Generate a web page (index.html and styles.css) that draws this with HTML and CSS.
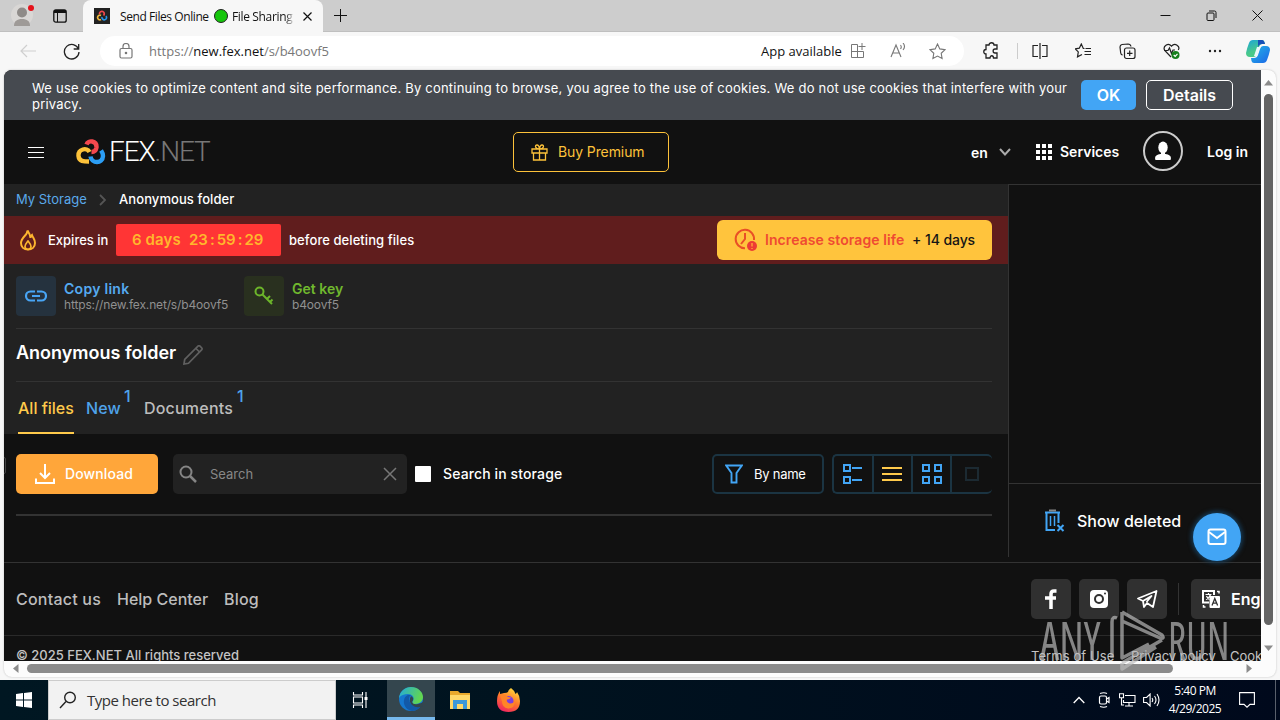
FILE: index.html
```html
<!DOCTYPE html>
<html lang="en">
<head>
<meta charset="utf-8">
<title>Send Files Online</title>
<link rel="stylesheet" href="styles.css">
</head>
<body>
<div class="desktop">
  <div class="titlebar">
    <svg class="profile" width="24" height="28" viewBox="0 0 24 28"><circle cx="11" cy="15" r="11" fill="#d9d7d5"/><circle cx="11" cy="12.500" r="5" fill="#8f8b88"/><path d="M3 26c0-5 3-7 8-7s8 2 8 7z" fill="#9e9a97"/><circle cx="20" cy="8" r="3" fill="#e5121b"/></svg>
    <svg class="workspace" width="14" height="14" viewBox="0 0 14 14" fill="none" stroke="#111"><rect x=".8" y=".8" width="12.400" height="12.400" rx="2" stroke-width="1.300"/><path d="M1 2.500h12" stroke-width="3"/><path d="M4.500 3v10"/></svg>
    <div class="tab">
      <svg class="favicon" width="16" height="16" viewBox="0 0 16 16"><rect width="16" height="16" fill="#222"/><g fill="none" stroke-width="1.700"><path d="M5.500 6a2.400 2.400 0 1 1 4 1.500" stroke="#f0484c"/><path d="M7 7.500a2.300 2.300 0 1 0 0 4" stroke="#efb63b"/><path d="M8 9a2.300 2.300 0 1 0 4-1" stroke="#2695e8"/></g></svg>
      <span class="tab-a">Send Files Online</span><i class="dot"></i><span class="tab-b">File Sharing</span>
      <svg class="tab-x" width="9" height="9" viewBox="0 0 9 9"><path d="M.5.5l8 8m0-8l-8 8" stroke="#111" stroke-width="1.200"/></svg>
    </div>
    <svg class="plus" width="14" height="14" viewBox="0 0 14 14"><path d="M6.500 0v13M0 6.500h13" stroke="#111"/></svg>
    <div class="wincontrols">
      <svg width="11" height="11" viewBox="0 0 11 11"><path d="M.5 5.500h10" stroke="#111"/></svg>
      <svg width="11" height="11" viewBox="0 0 11 11" fill="none" stroke="#111"><rect x="1" y="3" width="7" height="7.500" rx="1"/><path d="M3 1h5.500q1.500 0 1.500 1.500V8"/></svg>
      <svg width="11" height="11" viewBox="0 0 11 11"><path d="M.5.5l10 10m0-10l-10 10" stroke="#111"/></svg>
    </div>
  </div>
  <div class="navbar">
    <svg class="back" width="16" height="14" viewBox="0 0 16 14" fill="none" stroke="#cfcfcf" stroke-width="1.200"><path d="M7 1L1 7l6 6M1 7h15"/></svg>
    <svg class="reload" width="17" height="17" viewBox="0 0 17 17" fill="none" stroke="#222" stroke-width="1.300"><path d="M15.500 6A7.300 7.300 0 1 0 16 9M15.700 1v5h-5"/></svg>
    <div class="address">
      <svg class="lock" width="14" height="16" viewBox="0 0 14 16" fill="none" stroke="#777" stroke-width="1.200"><rect x="1" y="5.500" width="12" height="9.500" rx="1.500"/><path d="M4 5V3.500a3 3 0 0 1 6 0V5"/><circle cx="7" cy="10" r=".7" fill="#777"/></svg>
      <span class="url">https://<b>new.fex.net</b>/s/b4oovf5</span>
      <span class="app">App available</span>
      <svg class="i-app" width="16" height="16" viewBox="0 0 16 16" fill="none" stroke="#777"><path d="M7.500 1.500h-6v13h12V8.500h-12M7.500 1.500v13M12 0v7M8.500 3.500h7"/></svg>
      <svg class="i-read" width="17" height="16" viewBox="0 0 17 16" fill="none" stroke="#777" stroke-width="1.100"><path d="M1 14L6 2l5 12M3 10h6M10.500 2q1.500 2 0 4M13 0q3 3.500 0 7"/></svg>
      <svg class="i-star" width="17" height="17" viewBox="0 0 17 17" fill="none" stroke="#777" stroke-width="1.100"><path d="M8.500 1l2.300 4.900 5.200.7-3.800 3.700.9 5.300-4.600-2.500-4.600 2.500.9-5.300L1 6.600l5.200-.7z"/></svg>
    </div>
    <div class="tools">
      <svg width="17" height="18" viewBox="0 0 17 18" fill="none" stroke="#222" stroke-width="1.300"><path d="M3 3h3c0-3 5-3 5 0h3v4h-2c-2.500 0-2.500 4 0 4h2v5h-3.500c0-3-3.500-3-3.500 0H3v-4c-3 0-3-4.500 0-4.500z"/></svg>
      <i class="vsep"></i>
      <svg width="16" height="16" viewBox="0 0 16 16" fill="none" stroke="#222" stroke-width="1.200"><path d="M6 2.500H1v11h5M10 2.500h5v11h-5M8 0v16"/></svg>
      <svg width="17" height="16" viewBox="0 0 17 16" fill="none" stroke="#222" stroke-width="1.200"><path d="M9.500 5.500H8.300L6.300 1 4.300 5.200l-4 .7 3 3-.8 5L7 11.500M10.500 5.500H16M9.500 8.500H16M9.500 11.500H16"/></svg>
      <svg width="17" height="17" viewBox="0 0 17 17" fill="none" stroke="#222" stroke-width="1.200"><path d="M12 3.500Q11.500 1 9 1L3 1.500Q1 2 1 4l.7 6q.3 2 2 2"/><rect x="5.500" y="5" width="10.500" height="10.500" rx="2"/><path d="M10.700 7.500v5.500M8 10.300h5.500"/></svg>
      <svg width="18" height="17" viewBox="0 0 18 17" fill="none" stroke="#222" stroke-width="1.200"><path d="M8 14L1.700 7.300C-.5 3.500 5-1 8.500 3.200 12-1 17.500 3.500 15.300 7M1 7.500h4L6.500 5l2 5.500L10 7h2"/><circle cx="12.500" cy="12" r="4" fill="#16801c" stroke="none"/><path d="M10.700 12l1.500 1.300 2.300-2.500" stroke="#fff"/></svg>
      <svg width="14" height="4" viewBox="0 0 14 4" fill="#222"><circle cx="2" cy="2" r="1.200"/><circle cx="7" cy="2" r="1.200"/><circle cx="12" cy="2" r="1.200"/></svg>
      <svg class="copilot" width="24" height="23" viewBox="0 0 24 23"><defs><linearGradient id="cp" x2=".5" y2="1"><stop stop-color="#1aa4db"/><stop offset=".7" stop-color="#48c98a"/></linearGradient><linearGradient id="cq" y2="1"><stop stop-color="#22b7e5"/><stop offset="1" stop-color="#1c66e8"/></linearGradient></defs><path d="M7 0h9q2 0 2.500 2L19 4h-3q-2 0-3 3l-2 7q-1 3-4 3H4q-4 0-4-4Q1 8 3 3 4 0 7 0z" fill="url(#cp)"/><path d="M17 6h3q4 0 4 4-1 5-3 10-1 3-4 3H8q-2 0-2.500-2L5 18h3q3 0 4-3l2-6q1-3 3-3z" fill="url(#cq)"/><path d="M12 0h4q2 0 3 4h-3q-3 0-4 3z" fill="#174fb8"/><path d="M11 7h3l-3 9H8z" fill="#e9f8fb"/></svg>
    </div>
  </div>
  <div class="frame">
    <div class="page">
      <div class="cookie">
        <p class="cookie-text">We use cookies to optimize content and site performance. By continuing to browse, you agree to the use of cookies. We do not use cookies that interfere with your<br><span>privacy.</span></p>
        <div class="btn-ok">OK</div><div class="btn-details">Details</div>
      </div>
      <div class="header">
        <svg class="burger" width="16" height="12" viewBox="0 0 16 12"><path d="M0 1.500h16M0 6.500h16M0 11.500h16" stroke="#fff"/></svg>
        <svg class="logo" width="30" height="26" viewBox="0 0 30 26" fill="none" stroke-width="4.400"><path d="M10.500 5.500C12 .5 21 1.500 20.500 8.500c-.5 3-2.500 4.500-5 4.500" stroke="#f5484e"/><path d="M13.500 13C11 8 2 10 2.500 17c.5 5.500 5.500 5.500 10.500 5.500" stroke="#fdc23a"/><path d="M14.500 17.500c1 7 12 8 12.500-.5 0-3-1-4-2-5.500" stroke="#2b9df4"/></svg>
        <span class="wordmark">FEX<em>.NET</em></span>
        <div class="premium"><svg width="17" height="17" viewBox="0 0 17 17" fill="none" stroke="#fdc23a" stroke-width="1.300"><path d="M1 5h15v4H1zM2.500 9v7h12V9M8.500 5v11M8.500 5C4 5 3.500 1 6 1c2 0 2.500 4 2.500 4s.5-4 2.500-4c2.500 0 2 4-2.500 4z"/></svg><span class="premium-t">Buy Premium</span></div>
        <span class="lang">en</span>
        <svg class="chev" width="12" height="8" viewBox="0 0 12 8"><path d="M1 1l5 5.500L11 1" fill="none" stroke="#aaa" stroke-width="2"/></svg>
        <svg class="grid9" width="16" height="16" viewBox="0 0 16 16"><path d="M0 2h16M0 8h16M0 14h16" stroke="#fff" stroke-width="4" stroke-dasharray="4 2"/></svg>
        <span class="services">Services</span>
        <div class="avatar"><svg width="18" height="20" viewBox="0 0 18 20" fill="#fff"><ellipse cx="9" cy="6.500" rx="4.700" ry="6"/><path d="M7 11h4v3H7zM1.500 19q-2-5 5-6h5q7 1 5 6z"/></svg></div>
        <span class="login">Log in</span>
      </div>
      <div class="main">
        <div class="left">
          <div class="crumbs"><span class="c1">My Storage</span><svg width="8" height="12" viewBox="0 0 8 12"><path d="M1 1l5 5-5 5" fill="none" stroke="#555" stroke-width="1.800"/></svg><span class="c2">Anonymous folder</span></div>
          <div class="expire">
            <svg class="fire" width="18" height="22" viewBox="0 0 18 22" fill="none" stroke="#fdb52f" stroke-width="2"><path d="M8.500 1.500C9 6 2 8 2 14c0 4 3 6.500 7 6.500s7-2.500 7-6.500c0-4-2-5-3-8-1 1-1.500 2-1.500 3C11 5 9.500 3 8.500 1.500z"/><path d="M9 12c-2 2.500-3 3.500-3 5.500 0 1.500 1.200 3 3 3s3-1.500 3-3C12 15.500 11 14.500 9 12z" stroke-width="1.700"/></svg>
            <span class="expin">Expires in</span>
            <div class="timer"><span class="days">6 days</span><span class="clock">23<i>:</i>59<i>:</i>29</span></div>
            <span class="before">before deleting files</span>
            <div class="increase"><svg width="24" height="24" viewBox="0 0 24 24" fill="none" stroke="#e95026" stroke-width="2"><path d="M20 12A9.200 9.200 0 1 0 11 20.200"/><path d="M11 5v6l-4 5"/><circle cx="18" cy="18" r="5" fill="#ed3c35" stroke="none"/><path d="M18 15v3.500M18 20v1" stroke="#ff9b38" stroke-width="1.500"/></svg><span class="inc-a">Increase storage life</span><span class="inc-b">+ 14 days</span></div>
          </div>
          <div class="share">
            <div class="sq blue"><svg width="22" height="12" viewBox="0 0 22 12" fill="none" stroke="#48a5f5" stroke-width="2.200"><path d="M10 1.500H5.500a4.500 4.500 0 0 0 0 9H10M12 1.500h4.500a4.500 4.500 0 0 1 0 9H12M7 6h8"/></svg></div>
            <div class="pair p1"><b>Copy link</b><span>https://new.fex.net/s/b4oovf5</span></div>
            <div class="sq green"><svg width="20" height="20" viewBox="0 0 20 20" fill="none" stroke="#6cb52a" stroke-width="2"><circle cx="5.500" cy="5.500" r="4"/><path d="M8.500 8.500L18 18M13 13l3-3M16 16l2.500-2.500"/></svg></div>
            <div class="pair p2"><b>Get key</b><span>b4oovf5</span></div>
          </div>
          <div class="title"><span>Anonymous folder</span><svg width="20" height="20" viewBox="0 0 20 20" fill="none" stroke="#606060" stroke-width="1.700"><path d="M1 19l.7-4.500L15.200 1q.8-.6 1.600 0l2 2q.6.800 0 1.600L5.500 18.300zM13 3.500L16.500 7"/></svg></div>
          <div class="tabs"><span class="t t1">All files</span><span class="t t2">New</span><sup>1</sup><span class="t t3">Documents</span><sup>1</sup></div>
          <div class="bar">
            <div class="download"><svg width="20" height="20" viewBox="0 0 20 20" fill="none" stroke="#fff" stroke-width="2"><path d="M10 0v13M5 9l5 5 5-5M1 14.500V19h18v-4.500"/></svg><span>Download</span></div>
            <div class="search"><svg width="18" height="18" viewBox="0 0 18 18" fill="none" stroke="#858585" stroke-width="2"><circle cx="7" cy="7" r="5.500"/><path d="M11 11l6 6" stroke-width="2.500"/></svg><span>Search</span><svg width="14" height="14" viewBox="0 0 14 14"><path d="M1 1l12 12M13 1L1 13" stroke="#777" stroke-width="1.500"/></svg></div>
            <i class="check"></i><span class="sis">Search in storage</span>
            <div class="sort"><svg width="18" height="20" viewBox="0 0 18 20" fill="none" stroke="#42a5f5" stroke-width="1.900"><path d="M1.200 1.500h15.600L11.500 9v9.500h-5V9z"/></svg><span>By name</span></div>
            <div class="views">
              <div><svg width="20" height="20" viewBox="0 0 20 20" fill="none" stroke="#42a5f5" stroke-width="2"><path d="M1 1h6v6H1zM1 13h6v6H1zM9 4h10M9 16h10"/></svg></div>
              <div><svg width="20" height="20" viewBox="0 0 20 20" stroke="#ffca4b" stroke-width="2"><path d="M0 4h20M0 10h20M0 16h20"/></svg></div>
              <div><svg width="20" height="20" viewBox="0 0 20 20" fill="none" stroke="#42a5f5" stroke-width="2"><path d="M1 1h6v6H1zM13 1h6v6h-6zM1 13h6v6H1zM13 13h6v6h-6z"/></svg></div>
              <div><svg width="20" height="20" viewBox="0 0 20 20" fill="none" stroke="#1c2a32" stroke-width="2"><path d="M4 4h12v12H4z"/></svg></div>
            </div>
          </div>
          <div class="rule"></div>
        </div>
        <div class="right">
          <div class="ad"></div>
          <div class="deleted"><svg width="20" height="24" viewBox="0 0 20 24" fill="none" stroke="#42a5f5" stroke-width="2"><path d="M0 3.500h15M1.500 4v17H10M13.500 4v10"/><path d="M5.500 7v10M9.500 7v10" stroke-width="1.500"/><path d="M4 1.500h7" stroke="#888"/><path d="M12.500 16l6 6M18.500 16l-6 6"/></svg><span>Show deleted</span></div>
        </div>
      </div>
      <div class="foot">
        <span class="f1">Contact us</span><span class="f2">Help Center</span><span class="f3">Blog</span>
        <div class="socials">
          <div class="soc"><svg width="14" height="20" viewBox="0 0 14 20" fill="none" stroke="#fff" stroke-width="3.500"><path d="M12.500 2H10Q7 2 7 5v15M1 9h11"/></svg></div>
          <div class="soc"><svg width="18" height="18" viewBox="0 0 18 18"><rect width="18" height="18" rx="4" fill="#fff"/><circle cx="9" cy="9" r="4" fill="none" stroke="#303030" stroke-width="2"/><circle cx="15" cy="3.500" r="1" fill="#303030"/></svg></div>
          <div class="soc"><svg width="21" height="19" viewBox="0 0 21 19" fill="none" stroke="#fff" stroke-width="1.800" stroke-linejoin="round"><path d="M1 8.500L19.500 1 16 17l-6-4-3 4-1-6zM6 11l8.500-5-5 6"/></svg></div>
          <i class="fsep"></i>
          <div class="fl"><svg width="18" height="18" viewBox="0 0 18 18" fill="none" stroke="#fff" stroke-width="1.500"><path d="M7 12.500H1V1h11v4" stroke-width="2"/><path d="M3.500 4.500h6M6.500 3v1.500M8.500 4.500q-1 3.500-4.500 5M4.500 6q1 2.500 3 3.500" stroke-width="1.200"/><path d="M15 1.500h2v2M1.500 15v2h2"/><rect x="7.500" y="6" width="10.500" height="12" rx="1" fill="#fff" stroke="none"/><path d="M10 15.500l2.800-7 2.800 7M11 13.200h3.600" stroke="#303030" stroke-width="1.300"/></svg><span>English</span></div>
        </div>
      </div>
      <div class="legal"><span class="copy">© 2025 FEX.NET All rights reserved</span><span class="l1">Terms of Use</span><span class="l2">Privacy policy</span><span class="l3">Cookies</span></div>
      <i class="handle"></i>
      <div class="chat"><svg width="20" height="18" viewBox="0 0 20 18" fill="none" stroke="#fff" stroke-width="2"><rect x="1.500" y="1.500" width="17" height="14.500" rx="2"/><path d="M2 4l8 6 8-6"/></svg></div>
    </div>
    <div class="vscroll"><svg width="9" height="6" viewBox="0 0 9 6"><path d="M4.500 0L9 5.500H0z" fill="#8b8b8b"/></svg><i></i><svg width="9" height="6" viewBox="0 0 9 6"><path d="M4.500 6L9 .5H0z" fill="#8b8b8b"/></svg></div>
    <div class="hscroll"><svg width="6" height="9" viewBox="0 0 6 9"><path d="M0 4.500L5.500 0v9z" fill="#8b8b8b"/></svg><i></i><svg width="6" height="9" viewBox="0 0 6 9"><path d="M6 4.500L.5 0v9z" fill="#8b8b8b"/></svg></div>
  </div>
  <div class="taskbar">
    <div class="start"><svg width="16" height="16" viewBox="0 0 16 16" fill="#fff"><path d="M0 2l7-1v6.500H0zM8 .9L16 0v7.500H8zM0 8.500h7V15l-7-1zM8 8.500h8V16l-8-1z"/></svg></div>
    <div class="tsearch"><svg width="18" height="18" viewBox="0 0 18 18" fill="none" stroke="#222" stroke-width="1.400"><circle cx="11" cy="6.500" r="5.300"/><path d="M7 10.500L1 17"/></svg><span>Type here to search</span></div>
    <div class="tbtn first"><svg width="16" height="16" viewBox="0 0 16 16" fill="none" stroke="#fff" stroke-width="1.100"><path d="M1.500 0v3h9V0M1.500 5h9v6h-9zM1.500 16v-3h9v3M14 0v16"/><path d="M14 5v3" stroke-width="3"/></svg></div>
    <div class="tbtn active"><svg width="24" height="24" viewBox="0 0 24 24"><defs><linearGradient id="eg" x2="1" y2=".3"><stop stop-color="#22aadd"/><stop offset="1" stop-color="#62d650"/></linearGradient></defs><circle cx="12" cy="12" r="12" fill="#1577cf"/><path d="M0 11C1 4 6 0 12 0c7 0 12 5 12 10 0 4-3 7-8 7-3 0-3-2-2-3 2-4-1-7-5-7-4 0-7 1-9 4z" fill="url(#eg)"/><path d="M9 8c-6 2-6 14 4 16 4 0 8-3 10-6-7 3-13-1-13-6q0-3 2-4z" fill="#1259a8"/><path d="M12 9q4 2 1 6 1 3 6 2 4-1 5-2v4q-6 3-11-1-4-4-1-9z" fill="#33454d"/></svg></div>
    <div class="tbtn"><svg width="22" height="20" viewBox="0 0 22 20"><path d="M1 1h8l2 2h10v16H1z" fill="#e9a92c"/><path d="M1 5h20v14H1z" fill="#ffd869"/><path d="M4 19v-9h14v9h-4v-5H8v5z" fill="#3c98d9"/></svg></div>
    <div class="tbtn"><svg width="23" height="24" viewBox="0 0 23 24"><defs><linearGradient id="ff" x1=".8" x2=".3" y2="1"><stop stop-color="#ffe23d"/><stop offset=".5" stop-color="#ff7a2a"/><stop offset="1" stop-color="#f02460"/></linearGradient></defs><path d="M14 0q4 3 4.500 6Q20 5 20 4q3 4 3 9 0 11-11.500 11T0 13Q0 7 3 3v3l4-1q3 0 4-1 0-2 3-4z" fill="url(#ff)"/><circle cx="11.500" cy="13" r="5" fill="#7a3ee0"/><path d="M3 7q5-2 8 2l3 .5q-1 2-4 2-1 3 3 4 4 0 5-3 0 8-7 8-6-1-6-7z" fill="#ff8428"/></svg></div>
    <div class="tray">
      <svg width="12" height="8" viewBox="0 0 12 8"><path d="M.7 7L6 1.500 11.300 7" fill="none" stroke="#fff" stroke-width="1.300"/></svg>
      <svg width="12" height="16" viewBox="0 0 12 16" fill="none" stroke="#fff" stroke-width="1.200"><rect x="1.500" y="4" width="7" height="8" rx="1.500"/><path d="M8.500 7L11 5.500v5L8.500 9M2 1.500q4-1.500 7 0M2 14.500q4 1.500 7 0"/></svg>
      <svg width="17" height="14" viewBox="0 0 17 14" fill="none" stroke="#fff" stroke-width="1.100"><path d="M6 2.500h10v7H4.500V7M10 9.500v3.500M6 13h8M.5.8h4v4h-4zM2.500 5v7H5"/></svg>
      <svg width="17" height="14" viewBox="0 0 17 14" fill="none" stroke="#fff" stroke-width="1.100"><path d="M.6 4.500h3l3.500-3.500v12L3.600 9.500h-3zM9 5q1.500 2 0 4M11.500 3q3 4 0 8M14 1q4 6 0 12"/></svg>
      <div class="time"><span>5:40 PM</span><span>4/29/2025</span></div>
      <svg width="16" height="16" viewBox="0 0 16 16" fill="none" stroke="#fff" stroke-width="1.100"><path d="M.6.6h14.800v11.800H11L8 15.200 5 12.400H.6z"/></svg>
    </div>
    <i class="showdesk"></i>
  </div>
  <div class="watermark"><span class="wm1">ANY</span><svg width="56" height="62" viewBox="0 0 56 62" fill="none" stroke="#bdbdbd" stroke-width="3.500" stroke-linejoin="round"><path d="M7 8Q2 6 2 12v36M12 2l40 23q3 4-2 3L12 11M12 2v46l27-14M12 53l40-23M12 53v6l34-22"/></svg><span class="wm2">RUN</span></div>
</div>
</body>
</html>
```
FILE: styles.css
```css
* { box-sizing: border-box; }
body { margin: 0; }
svg { display: block; flex: none; }
span { white-space: nowrap; flex: none; }
i { font-style: normal; flex: none; }
.desktop { width: 1280px; height: 720px; overflow: hidden; position: relative; display: flex; flex-direction: column; background: #f7f7f7; font-family: Inter, "Liberation Sans", sans-serif; }

/* Browser chrome */
.titlebar { height: 32px; flex: none; display: flex; background: #cdcdcd; border-bottom: 1px solid #bfbfbf; font: 12px "Open Sans", sans-serif; color: #111; }
.profile { margin-left: 11px; width: 24px; }
.workspace { margin: 9px 0 0 18px; }
.tab { width: 240px; height: 32px; margin-left: 16px; padding: 0 11px; background: #f7f7f7; border-radius: 8px 8px 0 0; display: flex; align-items: center; }
.favicon { margin-right: 10px; }
.tab-a { width: 94px; letter-spacing: -.42px; }
.dot { width: 14px; height: 14px; border-radius: 50%; background: #16c60c; border: 1px solid #222; margin-right: 4px; }
.tab-b { width: 71px; letter-spacing: -.35px; background: linear-gradient(90deg, #111 75%, #ccc 86%); background-clip: text; color: transparent; }
.tab-x { margin-top: 1px; }
.plus { margin: 9px 0 0 11px; }
.wincontrols { margin: 10px 17px 0 auto; display: flex; gap: 35px; }
.navbar { height: 38px; flex: none; display: flex; align-items: center; font: 13px "Open Sans", sans-serif; color: #111; }
.back { margin-left: 20px; }
.reload { margin-left: 27px; }
.address { width: 864px; height: 30px; margin-left: 20px; background: #fff; border-radius: 15px; display: flex; align-items: center; padding-left: 19px; }
.url { margin-left: 16px; width: 612px; color: #777; }
.url b { color: #111; font-weight: 400; }
.app { width: 89px; }
.i-read { margin-left: 24px; }
.i-star { margin-left: 22px; }
.tools { flex: 1; display: flex; align-items: center; padding-left: 19px; }
.vsep { width: 1px; height: 16px; background: #ccc; margin: 0 14px 0 17px; }
.tools svg + svg { margin-left: 27px; }
.tools .copilot { margin-left: 24px !important; }

/* Page viewport with its scrollbars */
.frame { width: 1272px; height: 607px; margin: 0 4px; flex: none; display: grid; grid-template: 591px 16px / 1257px 15px; background: #fcfcfc; border-radius: 8px; overflow: hidden; box-shadow: 0 0 2px #bbb; }
.page { background: #111; overflow: hidden; position: relative; color: #fff; }
.vscroll { display: flex; flex-direction: column; align-items: center; padding: 10px 0 10px; gap: 8px; }
.vscroll svg:last-child { margin-top: 12px; }
.vscroll i { width: 9px; flex: 1; border-radius: 5px; background: #646464; }
.hscroll { display: flex; align-items: center; padding: 0 9px 2px; gap: 8px; }
.hscroll i { width: 1146px; height: 9px; border-radius: 5px; background: #8b8b8b; }
.hscroll svg:last-child { margin-left: auto; margin-right: 0; }

.cookie { height: 50px; background: #464a50; display: flex; align-items: flex-start; padding: 10px 28px 0; }
.cookie-text { margin: 0; width: 1049px; font-size: 13px; line-height: 16px; white-space: nowrap; letter-spacing: .215px; flex: none; }
.btn-ok, .btn-details { height: 30px; border-radius: 5px; font-size: 16px; font-weight: 600; display: flex; align-items: center; justify-content: center; }
.btn-ok { width: 55px; background: #42a5f5; }
.btn-details { width: 87px; margin-left: 10px; border: 1px solid #fff; }

.header { height: 64px; display: flex; align-items: center; font-size: 14px; font-weight: 600; }
.burger { margin-left: 24px; }
.logo { margin-left: 32px; }
.wordmark { margin-left: 3px; width: 404px; font: 300 28px/32px Roboto, sans-serif; letter-spacing: -1.100px; }
.wordmark em { font-style: normal; font-weight: 300; color: #777; }
.premium { width: 156px; height: 40px; border: 1px solid #fdc23a; border-radius: 5px; display: flex; align-items: center; padding-left: 17px; gap: 10px; color: #fdc23a; font-weight: 400; }
.premium-t { letter-spacing: -.1px; padding-bottom: 1px; }
.lang { margin-left: 302px; width: 28px; }
.services, .login { padding-bottom: 1px; }
.grid9 { margin-left: 25px; }
.services { margin-left: 8px; width: 83px; }
.avatar { width: 40px; height: 40px; border: 2px solid #ccc; border-radius: 50%; display: flex; align-items: center; justify-content: center; margin-bottom: 2px; }
.login { margin-left: 24px; }

.main { height: 379px; display: flex; border-bottom: 1px solid #333; }
.left { width: 1004px; display: flex; flex-direction: column; }
.crumbs { height: 32px; background: #222; display: flex; align-items: center; font-size: 13px; padding: 0 0 2px 12px; }
.crumbs svg { margin-top: 2px; }
.c1 { width: 83px; color: #5aa9ea; }
.c2 { margin-left: 12px; font-weight: 500; letter-spacing: .08px; }
.expire { height: 48px; background: #601d1d; display: flex; align-items: center; padding: 0 16px 0 15px; font-size: 13px; font-weight: 500; }
.expin { margin-left: 11px; width: 68px; }
.timer { width: 165px; height: 32px; background: #ff3535; border-radius: 2px; color: #ffb72c; font-size: 15px; font-weight: 600; display: flex; align-items: center; padding-left: 16px; }
.timer span { padding-bottom: 1px; }
.days { width: 57px; letter-spacing: .1px; }
.clock i { padding: 0 2px; }
.before { margin-left: 8px; letter-spacing: .07px; }
.increase { width: 275px; height: 40px; margin-left: auto; background: #ffc43d; border-radius: 6px; display: flex; align-items: center; padding-left: 17px; font-size: 14px; }
.increase span { padding-bottom: 1px; }
.inc-a { color: #ef4a32; width: 147px; margin-left: 7px; font-weight: 600; letter-spacing: .08px; }
.inc-b { color: #151515; font-weight: 500; letter-spacing: -.08px; }
.share { height: 64px; background: #222; padding: 0 16px 0 12px; display: flex; align-items: center; }
.sq { width: 40px; height: 40px; border-radius: 4px; display: flex; align-items: center; justify-content: center; }
.blue { background: #25323e; }
.green { background: #29301f; }
.pair { display: flex; flex-direction: column; margin-left: 8px; }
.pair b { font-size: 14px; line-height: 17px; font-weight: 600; }
.pair span { font-size: 12px; line-height: 15px; color: #909090; letter-spacing: -.15px; }
.p1 { width: 180px; color: #55aaf0; }
.p1 b { letter-spacing: .28px; }
.p2 { color: #70b82e; }
.title { height: 54px; display: flex; align-items: center; margin: 0; padding: 0 16px 5px 12px; font-size: 18px; font-weight: 600; background: linear-gradient(#333, #333) 12px 0 / 976px 1px no-repeat, linear-gradient(#333, #333) 12px 53px / 976px 1px no-repeat, #222; }
.title span { width: 167px; }
.title svg { margin-top: 4px; }
.tabs { height: 52px; background: #222; display: flex; padding-left: 14px; font-size: 16px; font-weight: 500; line-height: 52px; }
.t1 { width: 56px; color: #ffca4b; border-bottom: 2px solid #ffca4b; }
.t2 { margin-left: 12px; width: 38px; color: #4fa3ea; letter-spacing: .15px; }
.t3 { width: 93px; color: #bdbdbd; letter-spacing: .2px; }
.tabs sup { width: 20px; font-size: 16px; line-height: 28px; color: #4fa3ea; vertical-align: top; }
.bar { display: flex; align-items: center; padding: 20px 16px 0 12px; height: 60px; }
.download { width: 142px; height: 40px; background: #ffa63a; border-radius: 5px; display: flex; align-items: center; padding-left: 19px; gap: 10px; font-size: 14px; font-weight: 500; }
.download span, .sis { padding-bottom: 1px; letter-spacing: .12px; }
.search { width: 234px; height: 40px; margin-left: 15px; border-radius: 5px; background: #222; color: #888; display: flex; align-items: center; padding: 0 10px 0 6px; font-size: 13px; }
.search span { margin-left: 13px; flex: 1; }
.check { width: 16px; height: 16px; background: #fff; border-radius: 1px; margin-left: 8px; }
.sis { margin-left: 12px; font-size: 14px; font-weight: 500; }
.sort { width: 112px; height: 40px; margin-left: auto; border: 2px solid #1b3442; border-radius: 5px; display: flex; align-items: center; padding-left: 11px; gap: 11px; font-size: 13px; }
.sort span { letter-spacing: -.25px; }
.views { width: 160px; height: 40px; margin-left: 8px; border: 2px solid #1b3442; border-right: 0; border-radius: 5px; display: grid; grid-template-columns: 40px 39px 39px 40px; }
.views div { display: flex; align-items: center; justify-content: center; border-right: 2px solid #1b3442; }
.views div:nth-child(2) { padding-right: 1px; }
.views div:last-child { border: 0; }
.rule { height: 2px; margin: 20px 16px 0 12px; background: #333; }
.right { width: 253px; height: 373px; border-left: 1px solid #333; border-top: 1px solid #333; display: flex; flex-direction: column; }
.ad { height: 300px; border-bottom: 1px solid #333; }
.deleted { height: 73px; display: flex; align-items: center; padding-left: 36px; gap: 12px; font-size: 16px; font-weight: 500; }
.foot { height: 73px; border-bottom: 1px solid #2a2a2a; display: flex; align-items: center; padding-left: 12px; font-size: 16px; font-weight: 500; color: #bdbdbd; }
.f1 { width: 101px; letter-spacing: .22px; }
.f2 { width: 107px; }
.f3 { letter-spacing: .2px; }
.socials { margin-left: auto; width: 230px; flex: none; display: flex; gap: 8px; align-items: center; color: #fff; }
.soc, .fl { width: 40px; height: 40px; border-radius: 5px; background: #303030; display: flex; align-items: center; justify-content: center; flex: none; }
.fsep { width: 1px; height: 32px; margin: 0 4px 0 3px; background: #333; }
.fl { width: 120px; justify-content: flex-start; padding-left: 11px; gap: 11px; font-size: 16px; font-weight: 600; }
.legal { display: flex; padding: 11px 0 0 12px; font-size: 13px; line-height: 16px; color: #c4c4c4; font-weight: 500; }
.copy { width: 1015px; }
.l1 { width: 100px; letter-spacing: .08px; }
.l2 { width: 99px; letter-spacing: -.08px; }
.l1, .l2, .l3 { font-weight: 400; padding-top: 1px; }
.handle { position: absolute; left: -5px; top: 387px; width: 7px; height: 17px; border: 1px solid #444; border-radius: 2px; }
.chat { position: absolute; left: 1189px; top: 443px; width: 48px; height: 48px; border-radius: 50%; background: #42a5f5; display: flex; align-items: center; justify-content: center; box-shadow: 0 0 4px 2px #163a55; }

/* Windows taskbar */
.taskbar { height: 40px; margin-top: 3px; flex: none; display: flex; background: linear-gradient(90deg, #001722 0%, #00131f 40%, #00091c 100%); color: #fff; }
.start { width: 48px; display: flex; align-items: center; justify-content: center; }
.tsearch { width: 288px; background: #f2f2f2; border: 1px solid #ccc; display: flex; align-items: center; padding-left: 10px; gap: 10px; color: #333; font: 15px "Open Sans", sans-serif; letter-spacing: -.48px; }
.tbtn { width: 49px; display: flex; align-items: center; justify-content: center; }
.tbtn.first { width: 51px; padding-right: 3px; }
.active { width: 48px; background: #34464e; border-bottom: 3px solid #76b9ed; }
.tray { margin-left: auto; display: flex; align-items: center; margin-right: 25px; }
.tray svg:nth-child(2) { margin-left: 13px; }
.tray svg:nth-child(3) { margin-left: 9px; }
.tray svg:nth-child(4) { margin-left: 7px; }
.time { width: 70px; margin: 0 9px 0 0; display: flex; flex-direction: column; align-items: center; font: 12px/18px "Open Sans", sans-serif; letter-spacing: -.5px; }
.showdesk { width: 1px; margin-right: 4px; margin-left: -5px; background: #59606b; }

.watermark { position: absolute; left: 1040px; top: 610px; height: 62px; display: flex; color: #bdbdbd; opacity: .68; font: 52px/60px "Open Sans", sans-serif; font-stretch: 75%; }
.wm1 { width: 70px; transform: scaleX(.84); transform-origin: left; }
.wm2 { width: 60px; transform: scaleX(.77); transform-origin: left; margin-left: 2px; }
```
